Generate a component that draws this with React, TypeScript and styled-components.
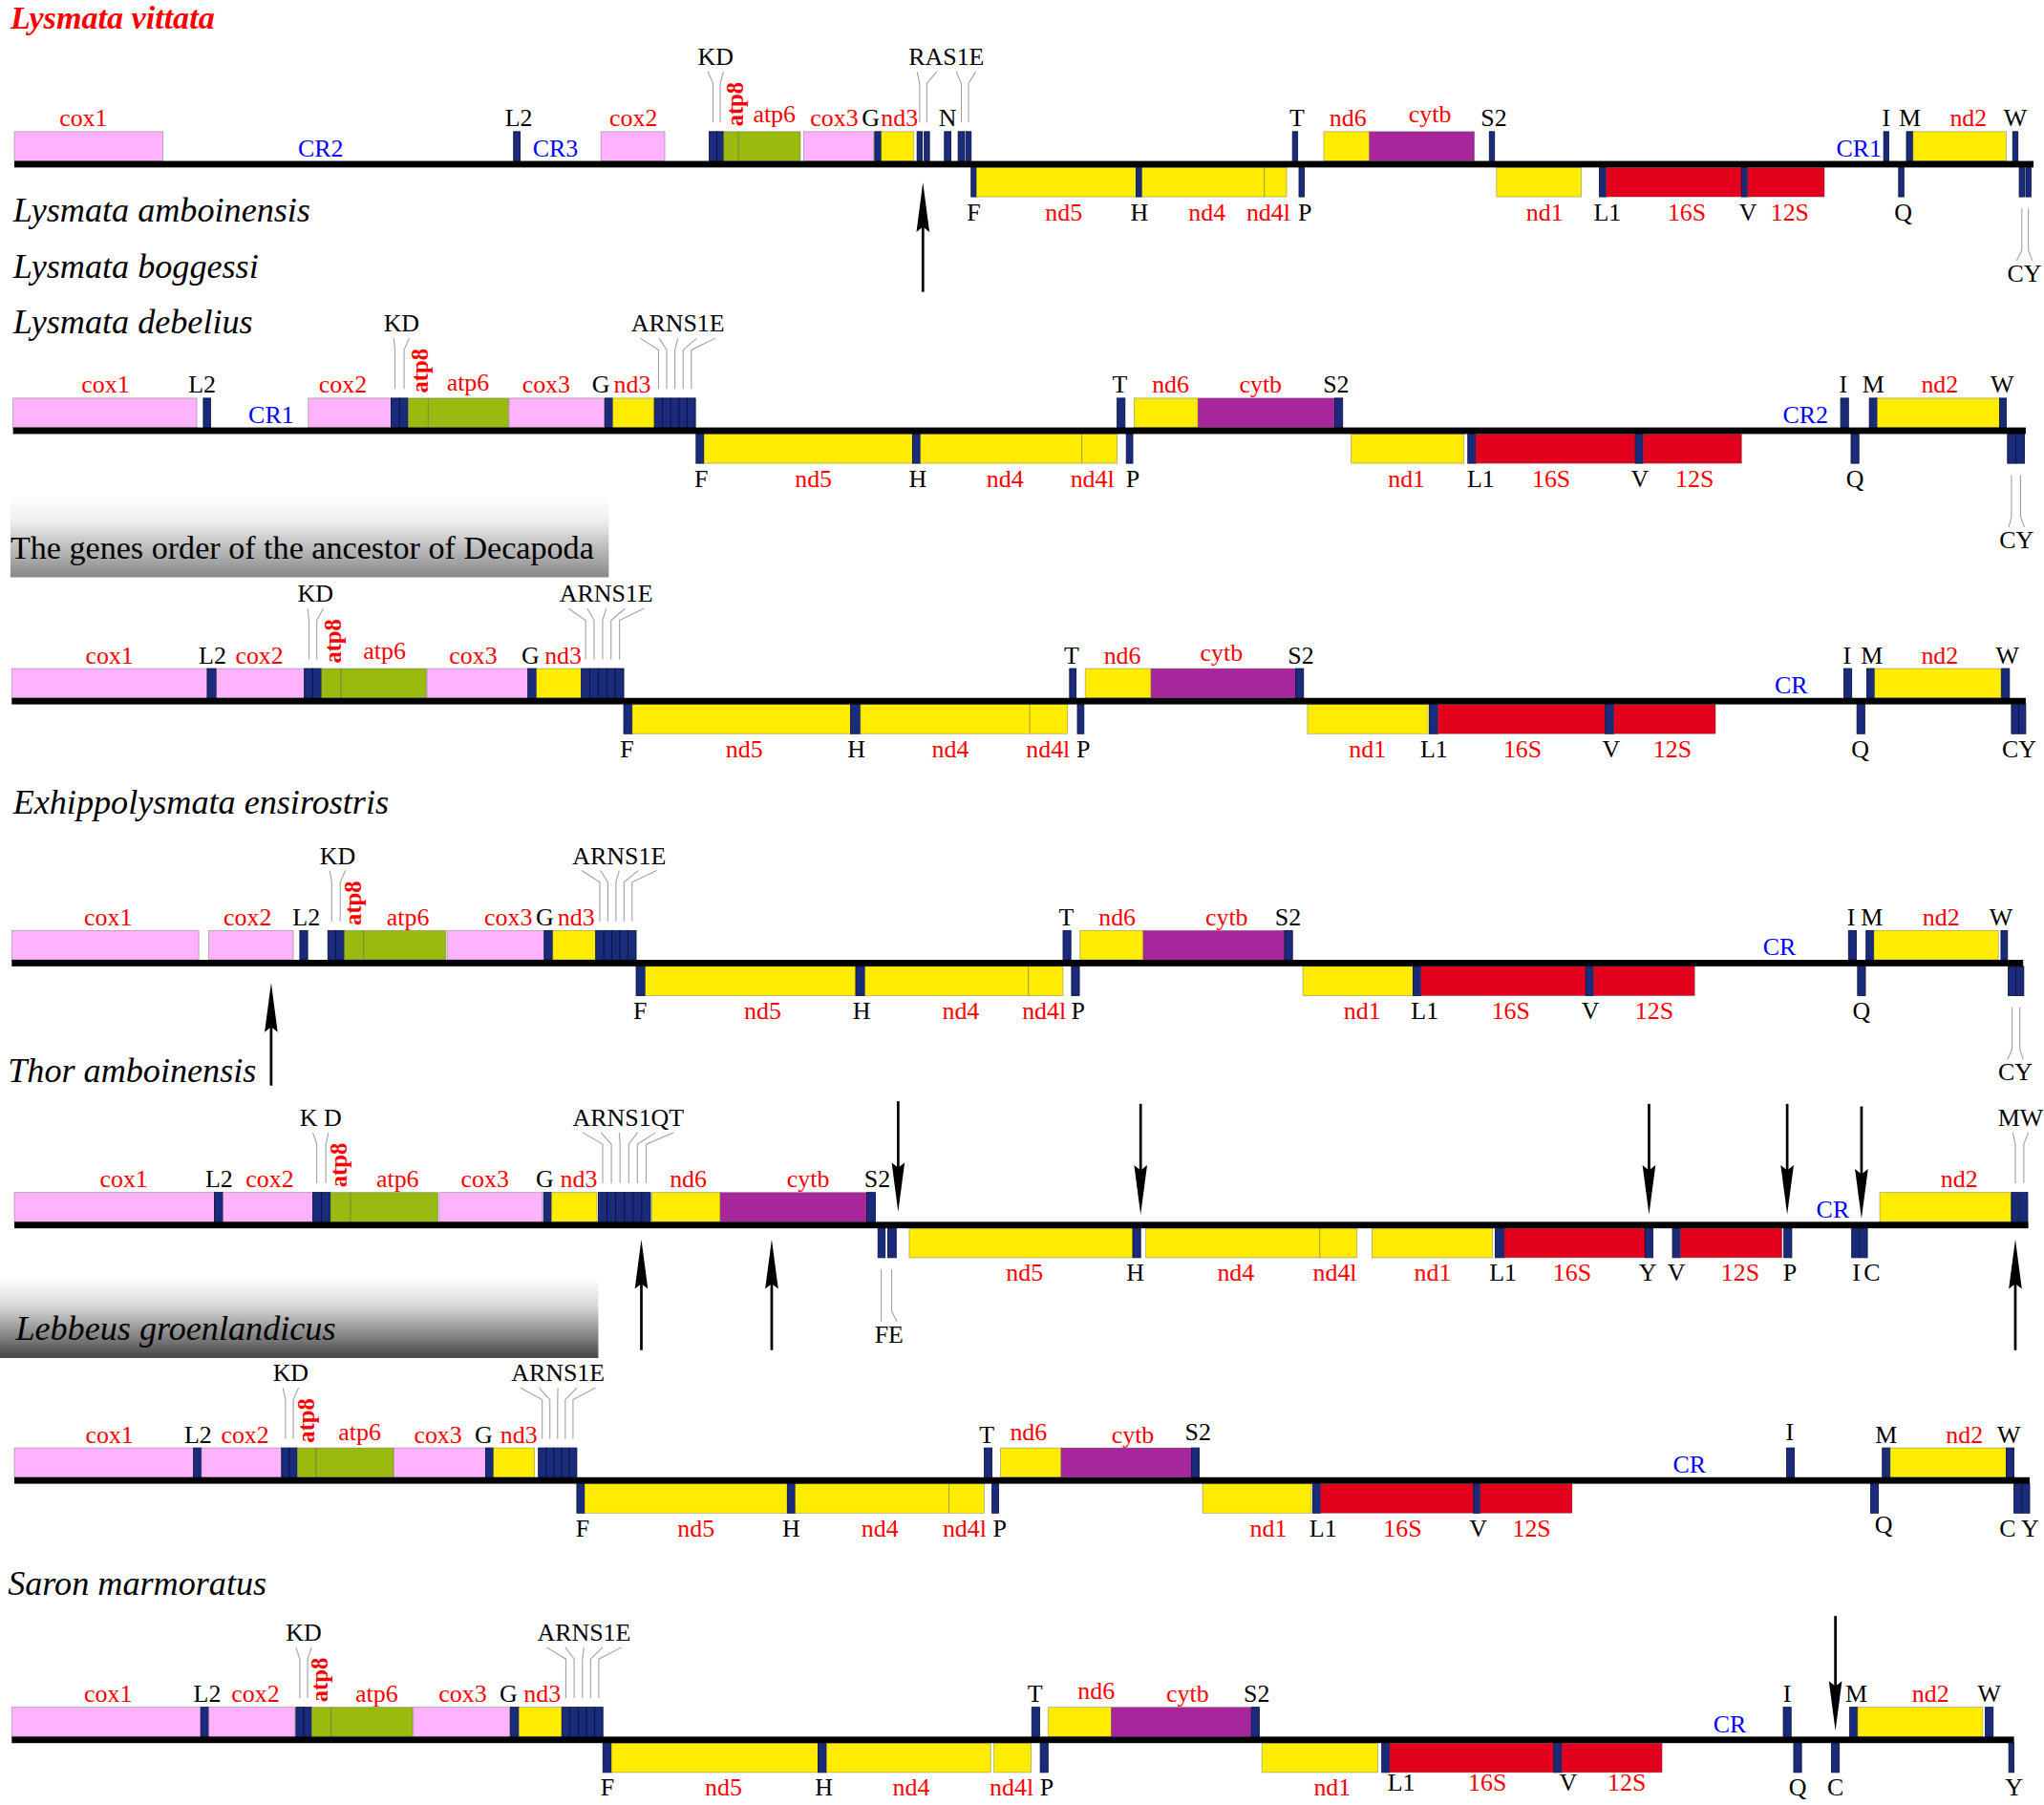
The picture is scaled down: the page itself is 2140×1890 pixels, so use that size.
import React from "react";
import styled, { createGlobalStyle } from "styled-components";

const GlobalStyle = createGlobalStyle`
  html, body {
    margin: 0;
    padding: 0;
    background: #ffffff;
  }
`;

type Col = "P" | "G" | "Y" | "U" | "R" | "B";
type Tone = "g" | "t" | "c";
type Seg = [number, number, Col];
type Lab = [string, number, Tone?, number?];

interface Stack {
  text: string;
  x: number;
  bars: number[];
  below?: boolean;
}

interface ArrowMark {
  x: number;
  from: number;
  to: number;
}

interface TrackData {
  base: number;
  x0: number;
  x1: number;
  up: Seg[];
  dn: Seg[];
  top: Lab[];
  bot: Lab[];
  cr: [string, number][];
  atp8: number;
  stacks: Stack[];
  arrows?: ArrowMark[];
}

const COLORS: Record<Col, string> = {
  P: "#ffb3fe",
  G: "#9aba10",
  Y: "#ffec00",
  U: "#a8269b",
  R: "#e2001d",
  B: "#1b2b7c",
};

// n adjacent tRNA bars sharing one span
const run = (a: number, b: number, n: number): Seg[] =>
  Array.from({ length: n }, (_, i) => [a + ((b - a) * i) / n, a + ((b - a) * (i + 1)) / n, "B"] as Seg);

const mids = (a: number, b: number, n: number) =>
  Array.from({ length: n }, (_, i) => a + ((b - a) * (i + 0.5)) / n);

const tracks: TrackData[] = [
  {
    base: 126,
    x0: 11,
    x1: 1560,
    up: [
      [11, 125, "P"], [394, 399, "B"], [461, 510, "P"], [544, 550, "B"], [550, 555, "B"],
      [555, 566.5, "G"], [566.5, 614, "G"], [616.5, 670, "P"], [671, 676, "B"], [676, 701, "Y"],
      [703.5, 707.5, "B"], [709, 713, "B"], [724.5, 729.5, "B"], [735, 740, "B"], [741, 745, "B"],
      [991.5, 995.5, "B"], [1015.5, 1050.5, "Y"], [1050.5, 1131, "U"], [1142.5, 1146.5, "B"],
      [1445, 1449, "B"], [1462.5, 1467.5, "B"], [1467.5, 1539, "Y"], [1544, 1548, "B"],
    ],
    dn: [
      [745, 749, "B"], [749, 871.5, "Y"], [871.5, 876, "B"], [876, 970, "Y"], [970, 987, "Y"],
      [996.5, 1000.5, "B"], [1148, 1213, "Y"], [1227, 1232, "B"], [1232, 1336, "R"],
      [1336, 1340.5, "B"], [1340.5, 1399.5, "R"], [1456.5, 1460.5, "B"], [1549, 1553, "B"], [1554, 1558, "B"],
    ],
    top: [
      ["cox1", 64], ["L2", 398, "t"], ["cox2", 486], ["atp6", 594, "g", -3], ["cox3", 640],
      ["G", 668, "t"], ["nd3", 690], ["N", 727, "t"], ["T", 995, "t"], ["nd6", 1034],
      ["cytb", 1097, "g", -3], ["S2", 1146, "t"], ["I", 1447, "t"], ["M", 1465, "t"], ["nd2", 1510], ["W", 1546, "t"],
    ],
    bot: [
      ["F", 747, "t"], ["nd5", 816], ["H", 874, "t"], ["nd4", 926], ["nd4l", 973], ["P", 1001, "t"],
      ["nd1", 1185], ["L1", 1233, "t"], ["16S", 1294], ["V", 1341, "t"], ["12S", 1373], ["Q", 1460, "t"],
    ],
    cr: [["CR2", 246], ["CR3", 426], ["CR1", 1426]],
    atp8: 564,
    stacks: [
      { text: "KD", x: 549, bars: [547, 552.5] },
      { text: "RAS1E", x: 726, bars: [705.5, 711, 737.5, 743] },
      { text: "CY", x: 1553, bars: [1551, 1556], below: true },
    ],
    arrows: [{ x: 708, from: 224, to: 140 }],
  },
  {
    base: 330.5,
    x0: 10,
    x1: 1554,
    up: [
      [10, 151, "P"], [156, 161.5, "B"], [236.5, 300, "P"], [300, 306.5, "B"], [306.5, 313, "B"],
      [313, 328.5, "G"], [328.5, 390, "G"], [390.5, 463.5, "P"], [464, 470, "B"], [470, 502, "Y"],
      ...run(502, 533.5, 5), [857, 863, "B"], [870, 919, "Y"], [919, 1024, "U"], [1024, 1030, "B"],
      [1412, 1418, "B"], [1434, 1440, "B"], [1440, 1534, "Y"], [1534, 1539, "B"],
    ],
    dn: [
      [534, 540, "B"], [540, 700, "Y"], [700, 706, "B"], [706, 830, "Y"], [830, 857, "Y"], [864, 869, "B"],
      [1036.5, 1123, "Y"], [1126, 1132, "B"], [1132, 1254.5, "R"], [1254.5, 1260.5, "B"], [1260.5, 1336, "R"],
      [1420, 1426, "B"], [1540, 1546.5, "B"], [1546.5, 1553, "B"],
    ],
    top: [
      ["cox1", 81], ["L2", 155, "t"], ["cox2", 263], ["atp6", 359, "g", -2], ["cox3", 419], ["G", 461, "t"],
      ["nd3", 485], ["T", 859, "t"], ["nd6", 898], ["cytb", 967], ["S2", 1025, "t"], ["I", 1414, "t"],
      ["M", 1437, "t"], ["nd2", 1488], ["W", 1536, "t"],
    ],
    bot: [
      ["F", 538, "t"], ["nd5", 624], ["H", 704, "t"], ["nd4", 771], ["nd4l", 838], ["P", 869, "t"],
      ["nd1", 1079], ["L1", 1136, "t"], ["16S", 1190], ["V", 1258, "t"], ["12S", 1300], ["Q", 1423, "t"],
    ],
    cr: [["CR1", 208], ["CR2", 1385]],
    atp8: 322,
    stacks: [
      { text: "KD", x: 308, bars: [303, 310] },
      { text: "ARNS1E", x: 520, bars: mids(502, 533.5, 5) },
      { text: "CY", x: 1547, bars: [1543, 1550], below: true },
    ],
  },
  {
    base: 538,
    x0: 9,
    x1: 1554,
    up: [
      [9, 159, "P"], [159, 166, "B"], [166, 233.5, "P"], [233.5, 240, "B"], [240, 246.5, "B"],
      [246.5, 261.5, "G"], [261.5, 327, "G"], [327.5, 405, "P"], [405, 411.5, "B"], [411.5, 446, "Y"],
      ...run(446, 478.5, 5), [820.5, 825.5, "B"], [832.5, 883, "Y"], [883, 994, "U"], [994, 1000, "B"],
      [1414.5, 1420.5, "B"], [1432, 1438, "B"], [1438, 1535, "Y"], [1535.5, 1541.5, "B"],
    ],
    dn: [
      [478.5, 485, "B"], [485, 652.5, "Y"], [652.5, 660, "B"], [660, 790, "Y"], [790, 819, "Y"],
      [826.5, 831.5, "B"], [1003, 1095.5, "Y"], [1096.5, 1103, "B"], [1103, 1231.5, "R"],
      [1231.5, 1238, "B"], [1238, 1316, "R"], [1424.5, 1430.5, "B"], [1543, 1548.5, "B"], [1548.5, 1554, "B"],
    ],
    top: [
      ["cox1", 84], ["L2", 163, "t"], ["cox2", 199], ["atp6", 295, "g", -3], ["cox3", 363], ["G", 407, "t"],
      ["nd3", 432], ["T", 822, "t"], ["nd6", 861], ["cytb", 937, "g", -2], ["S2", 998, "t"], ["I", 1417, "t"],
      ["M", 1436, "t"], ["nd2", 1488], ["W", 1540, "t"],
    ],
    bot: [
      ["F", 481, "t"], ["nd5", 571], ["H", 657, "t"], ["nd4", 729], ["nd4l", 804], ["P", 831, "t"],
      ["nd1", 1049], ["L1", 1100, "t"], ["16S", 1168], ["V", 1236, "t"], ["12S", 1283], ["Q", 1427, "t"],
      ["CY", 1549, "t"],
    ],
    cr: [["CR", 1374]],
    atp8: 255,
    stacks: [
      { text: "KD", x: 242, bars: [237, 243] },
      { text: "ARNS1E", x: 465, bars: mids(446, 478.5, 5) },
    ],
  },
  {
    base: 739,
    x0: 9,
    x1: 1552,
    up: [
      [9, 152.5, "P"], [160, 225, "P"], [230, 236, "B"], [251.5, 257.5, "B"], [257.5, 264, "B"],
      [264, 279, "G"], [279, 342, "G"], [343, 417.5, "P"], [417.5, 424, "B"], [424, 457, "Y"],
      ...run(457, 488, 5), [815.5, 821.5, "B"], [828.5, 877, "Y"], [877, 985.5, "U"], [985.5, 991.5, "B"],
      [1418, 1424, "B"], [1431.5, 1437.5, "B"], [1437.5, 1533, "Y"], [1535, 1540, "B"],
    ],
    dn: [
      [488, 495, "B"], [495, 656.5, "Y"], [656.5, 663.5, "B"], [663.5, 789, "Y"], [789, 815.5, "Y"],
      [822, 828, "B"], [999.5, 1084, "Y"], [1084, 1090, "B"], [1090, 1216.5, "R"], [1216.5, 1222.5, "B"],
      [1222.5, 1300, "R"], [1425, 1431, "B"], [1540.5, 1546.5, "B"], [1546.5, 1552.5, "B"],
    ],
    top: [
      ["cox1", 83], ["cox2", 190], ["L2", 235, "t"], ["atp6", 313], ["cox3", 390], ["G", 418, "t"],
      ["nd3", 442], ["T", 818, "t"], ["nd6", 857], ["cytb", 941], ["S2", 988, "t"], ["I", 1420, "t"],
      ["M", 1436, "t"], ["nd2", 1489], ["W", 1535, "t"],
    ],
    bot: [
      ["F", 491, "t"], ["nd5", 585], ["H", 661, "t"], ["nd4", 737], ["nd4l", 801], ["P", 827, "t"],
      ["nd1", 1045], ["L1", 1093, "t"], ["16S", 1159], ["V", 1220, "t"], ["12S", 1269], ["Q", 1428, "t"],
    ],
    cr: [["CR", 1365]],
    atp8: 271,
    stacks: [
      { text: "KD", x: 259, bars: [254.5, 261] },
      { text: "ARNS1E", x: 475, bars: mids(457, 488, 5) },
      { text: "CY", x: 1546, bars: [1543.5, 1549.5], below: true },
    ],
    arrows: [{ x: 208, from: 833, to: 754 }],
  },
  {
    base: 940,
    x0: 11,
    x1: 1556,
    up: [
      [11, 164.5, "P"], [164.5, 171, "B"], [171, 240, "P"], [240, 246.5, "B"], [246.5, 253.5, "B"],
      [253.5, 269, "G"], [269, 336, "G"], [337, 416, "P"], [417, 423, "B"], [423, 458, "Y"],
      ...run(459, 499, 6), [500, 552.5, "Y"], [552.5, 665, "U"], [665, 671.5, "B"],
      [1442, 1543, "Y"], [1543, 1549, "B"], [1549.5, 1555.5, "B"],
    ],
    dn: [
      [673.5, 679, "B"], [681, 687.5, "B"], [697.5, 869, "Y"], [869, 875, "B"], [879, 1012.5, "Y"],
      [1012.5, 1041, "Y"], [1052.5, 1145, "Y"], [1147, 1154, "B"], [1154, 1262, "R"], [1262, 1268, "B"],
      [1283, 1289, "B"], [1289, 1367, "R"], [1368.5, 1374.5, "B"], [1420.5, 1426.5, "B"], [1427, 1432.5, "B"],
    ],
    top: [
      ["cox1", 95], ["L2", 168, "t"], ["cox2", 207], ["atp6", 305], ["cox3", 372], ["G", 418, "t"],
      ["nd3", 444], ["nd6", 528], ["cytb", 620], ["S2", 673, "t"], ["nd2", 1503],
    ],
    bot: [
      ["nd5", 786], ["H", 871, "t"], ["nd4", 948], ["nd4l", 1024], ["nd1", 1099], ["L1", 1153, "t"],
      ["16S", 1206], ["Y", 1264, "t"], ["V", 1286, "t"], ["12S", 1335], ["P", 1373, "t"],
      ["I", 1424, "t"], ["C", 1436, "t"],
    ],
    cr: [["CR", 1406]],
    atp8: 260,
    stacks: [
      { text: "K D", x: 246, bars: [243, 250] },
      { text: "ARNS1QT", x: 482, bars: mids(459, 499, 6) },
      { text: "MW", x: 1550, bars: [1546, 1552.5] },
      { text: "FE", x: 682, bars: [676, 684], below: true },
    ],
    arrows: [
      { x: 689, from: 845, to: 930 },
      { x: 875, from: 847, to: 932 },
      { x: 1265, from: 847, to: 932 },
      { x: 1371, from: 847, to: 932 },
      { x: 1428, from: 849, to: 935 },
      { x: 492, from: 1036, to: 951 },
      { x: 592, from: 1036, to: 951 },
      { x: 1546, from: 1036, to: 951 },
    ],
  },
  {
    base: 1136,
    x0: 11,
    x1: 1557,
    up: [
      [11, 148.5, "P"], [148.5, 154.5, "B"], [154.5, 216, "P"], [216, 222, "B"], [222, 228, "B"],
      [228, 242.5, "G"], [242.5, 302, "G"], [302, 372.5, "P"], [372.5, 378.5, "B"], [378.5, 410, "Y"],
      ...run(413, 442.5, 5), [755, 761, "B"], [767.5, 814, "Y"], [814, 914, "U"], [914, 920, "B"],
      [1370.5, 1376.5, "B"], [1444, 1450, "B"], [1450, 1539, "Y"], [1539, 1545, "B"],
    ],
    dn: [
      [442.5, 448.5, "B"], [448.5, 604, "Y"], [604, 610, "B"], [610, 728, "Y"], [728, 755, "Y"],
      [761, 766, "B"], [922.5, 1006, "Y"], [1007, 1013, "B"], [1013, 1130.5, "R"], [1130.5, 1135.5, "B"],
      [1135.5, 1206, "R"], [1435, 1441, "B"], [1545, 1551, "B"], [1551, 1557, "B"],
    ],
    top: [
      ["cox1", 84], ["L2", 152, "t"], ["cox2", 188], ["atp6", 276, "g", -2], ["cox3", 336], ["G", 371, "t"],
      ["nd3", 398], ["T", 757, "t"], ["nd6", 789, "g", -2], ["cytb", 869], ["S2", 919, "t", -2],
      ["I", 1373, "t", -2], ["M", 1447, "t"], ["nd2", 1507], ["W", 1541, "t"],
    ],
    bot: [
      ["F", 447, "t"], ["nd5", 534], ["H", 607, "t"], ["nd4", 675], ["nd4l", 740], ["P", 767, "t"],
      ["nd1", 973], ["L1", 1015, "t"], ["16S", 1076], ["V", 1134, "t"], ["12S", 1175], ["Q", 1445, "t", -3],
      ["C Y", 1549, "t"],
    ],
    cr: [["CR", 1296]],
    atp8: 235,
    stacks: [
      { text: "KD", x: 223, bars: [219, 225] },
      { text: "ARNS1E", x: 428, bars: mids(413, 442.5, 5) },
    ],
  },
  {
    base: 1335,
    x0: 9,
    x1: 1545,
    up: [
      [9, 154, "P"], [154, 160, "B"], [160, 226, "P"], [227, 233, "B"], [233, 239, "B"],
      [239, 254, "G"], [254, 316.5, "G"], [317, 391, "P"], [391.5, 398, "B"], [398, 431, "Y"],
      ...run(431, 462.5, 5), [791.5, 797.5, "B"], [804, 852.5, "Y"], [852.5, 960, "U"], [960, 966, "B"],
      [1368, 1374, "B"], [1419, 1425, "B"], [1425, 1521, "Y"], [1523, 1529, "B"],
    ],
    dn: [
      [462.5, 469, "B"], [469, 627.5, "Y"], [627.5, 634, "B"], [634, 760, "Y"], [762.5, 791, "Y"],
      [798, 804, "B"], [968, 1057, "Y"], [1060, 1066, "B"], [1066, 1192, "R"], [1192, 1198, "B"],
      [1198, 1275, "R"], [1376, 1382, "B"], [1405, 1411, "B"], [1541, 1545, "B"],
    ],
    top: [
      ["cox1", 83], ["L2", 159, "t"], ["cox2", 196], ["atp6", 289], ["cox3", 355], ["G", 390, "t"],
      ["nd3", 416], ["T", 794, "t"], ["nd6", 841, "g", -2], ["cytb", 911], ["S2", 964, "t"],
      ["I", 1371, "t"], ["M", 1424, "t"], ["nd2", 1481], ["W", 1526, "t"],
    ],
    bot: [
      ["F", 466, "t"], ["nd5", 555], ["H", 632, "t"], ["nd4", 699], ["nd4l", 776], ["P", 803, "t"],
      ["nd1", 1022], ["L1", 1075, "t", -4], ["16S", 1141, "g", -4], ["V", 1203, "t", -4], ["12S", 1248, "g", -4],
      ["Q", 1379, "t"], ["C", 1408, "t"], ["Y", 1545, "t"],
    ],
    cr: [["CR", 1327]],
    atp8: 245,
    stacks: [
      { text: "KD", x: 233, bars: [230, 236] },
      { text: "ARNS1E", x: 448, bars: mids(431, 462.5, 5) },
    ],
    arrows: [{ x: 1408, from: 1240, to: 1328 }],
  },
];

const species: { name: string; y: number; lead?: boolean; x?: number }[] = [
  { name: "Lysmata vittata", y: 22, lead: true, x: 8 },
  { name: "Lysmata amboinensis", y: 170 },
  { name: "Lysmata boggessi", y: 213 },
  { name: "Lysmata debelius", y: 256 },
  { name: "Exhippolysmata ensirostris", y: 624 },
  { name: "Thor amboinensis", y: 830, x: 6 },
  { name: "Lebbeus groenlandicus", y: 1028, x: 12 },
  { name: "Saron marmoratus", y: 1224, x: 6 },
];

const Figure = styled.div`
  width: 2140px;
  height: 1890px;
  background: #ffffff;
  overflow: hidden;
`;

const Chart = styled.svg`
  display: block;
  width: 100%;
  height: 100%;
`;

const Label = styled.text<{ $tone: Tone }>`
  font-family: "Liberation Serif", "Times New Roman", serif;
  font-size: 19px;
  fill: ${(p) => (p.$tone === "t" ? "#000000" : p.$tone === "c" ? "#0000ff" : "#ff0000")};
  text-anchor: middle;
`;

const Vertical = styled.text`
  font-family: "Liberation Serif", "Times New Roman", serif;
  font-size: 18px;
  font-weight: 700;
  fill: #ff0000;
  text-anchor: middle;
  dominant-baseline: central;
`;

const SpeciesName = styled.text<{ $lead?: boolean }>`
  font-family: "Liberation Serif", "Times New Roman", serif;
  font-style: italic;
  font-size: ${(p) => (p.$lead ? 25 : 26.5)}px;
  font-weight: ${(p) => (p.$lead ? 700 : 400)};
  fill: ${(p) => (p.$lead ? "#ff0000" : "#000000")};
`;

const BandTitle = styled.text`
  font-family: "Liberation Serif", "Times New Roman", serif;
  font-size: 25px;
  fill: #000000;
`;

const Leader = styled.path`
  fill: none;
  stroke: #a0a0a0;
  stroke-width: 0.8;
`;

const Gene = styled.rect<{ $col: Col }>`
  fill: ${(p) => COLORS[p.$col]};
  stroke: ${(p) => (p.$col === "B" ? "#080f3a" : "rgba(80, 80, 80, 0.45)")};
  stroke-width: 0.6;
`;

const Axis = styled.rect`
  fill: #000000;
`;

const ArrowShaft = styled.line`
  stroke: #000000;
  stroke-width: 2;
`;

const ArrowHead = styled.polygon`
  fill: #000000;
`;

const BOX = 22.5;
const HALF = 2.5;

const Arrow: React.FC<ArrowMark> = ({ x, from, to }) => {
  const dir = to < from ? 1 : -1;
  const headEnd = to + dir * 38;
  return (
    <g>
      <ArrowShaft x1={x} y1={from} x2={x} y2={to + dir * 20} />
      <ArrowHead points={`${x},${to} ${x - 5},${headEnd} ${x},${headEnd - dir * 4} ${x + 5},${headEnd}`} />
    </g>
  );
};

const StackLabel: React.FC<{ base: number; stack: Stack }> = ({ base, stack }) => {
  const n = stack.bars.length;
  const w = stack.text.replace(/\s/g, "").length * 12;
  const tops = stack.bars.map((_, i) => stack.x - w / 2 + (w * (i + 0.5)) / n);
  return (
    <g>
      {stack.bars.map((bx, i) => (
        <Leader
          key={i}
          d={
            stack.below
              ? `M${bx},${base + 34} L${bx},${base + 66} L${tops[i]},${base + 74}`
              : `M${tops[i]},${base - 71} L${bx},${base - 62} L${bx},${base - 32}`
          }
        />
      ))}
      <Label $tone="t" x={stack.x} y={stack.below ? base + 90 : base - 76}>
        {stack.text}
      </Label>
    </g>
  );
};

const Track: React.FC<{ data: TrackData }> = ({ data }) => {
  const { base } = data;
  return (
    <g>
      {data.up.map(([a, b, c], i) => (
        <Gene key={`u${i}`} $col={c} x={a} y={base - HALF - BOX} width={b - a} height={BOX} />
      ))}
      {data.dn.map(([a, b, c], i) => (
        <Gene key={`d${i}`} $col={c} x={a} y={base + HALF} width={b - a} height={BOX} />
      ))}
      <Axis x={data.x0} y={base - HALF} width={data.x1 - data.x0} height={HALF * 2} />
      {data.top.map(([t, x, tone = "g", dy = 0], i) => (
        <Label key={`t${i}`} $tone={tone} x={x} y={base - 29 + dy}>
          {t}
        </Label>
      ))}
      {data.bot.map(([t, x, tone = "g", dy = 0], i) => (
        <Label key={`b${i}`} $tone={tone} x={x} y={base + 43 + dy}>
          {t}
        </Label>
      ))}
      {data.cr.map(([t, x], i) => (
        <Label key={`c${i}`} $tone="c" x={x} y={base - 6}>
          {t}
        </Label>
      ))}
      <Vertical x={data.atp8} y={base - 46} transform={`rotate(-90 ${data.atp8} ${base - 46})`}>
        atp8
      </Vertical>
      {data.stacks.map((s, i) => (
        <StackLabel key={`s${i}`} base={base} stack={s} />
      ))}
      {data.arrows?.map((a, i) => (
        <Arrow key={`a${i}`} {...a} />
      ))}
    </g>
  );
};

export default function App() {
  return (
    <>
      <GlobalStyle />
      <Figure>
        <Chart viewBox="0 0 1568 1385" preserveAspectRatio="none">
          <defs>
            <linearGradient id="bandLight" x1="0" y1="0" x2="0" y2="1">
              <stop offset="0" stopColor="#ffffff" />
              <stop offset="0.3" stopColor="#f0f0f0" />
              <stop offset="1" stopColor="#878787" />
            </linearGradient>
            <linearGradient id="bandDark" x1="0" y1="0" x2="0" y2="1">
              <stop offset="0" stopColor="#ffffff" />
              <stop offset="0.35" stopColor="#d8d8d8" />
              <stop offset="1" stopColor="#454545" />
            </linearGradient>
          </defs>

          <rect x={8} y={380} width={459} height={63} fill="url(#bandLight)" />
          <BandTitle x={8} y={429}>
            The genes order of the ancestor of Decapoda
          </BandTitle>
          <rect x={0} y={981} width={459} height={61} fill="url(#bandDark)" />

          {species.map((s) => (
            <SpeciesName key={s.name} $lead={s.lead} x={s.x ?? 10} y={s.y}>
              {s.name}
            </SpeciesName>
          ))}

          {tracks.map((t, i) => (
            <Track key={i} data={t} />
          ))}
        </Chart>
      </Figure>
    </>
  );
}
